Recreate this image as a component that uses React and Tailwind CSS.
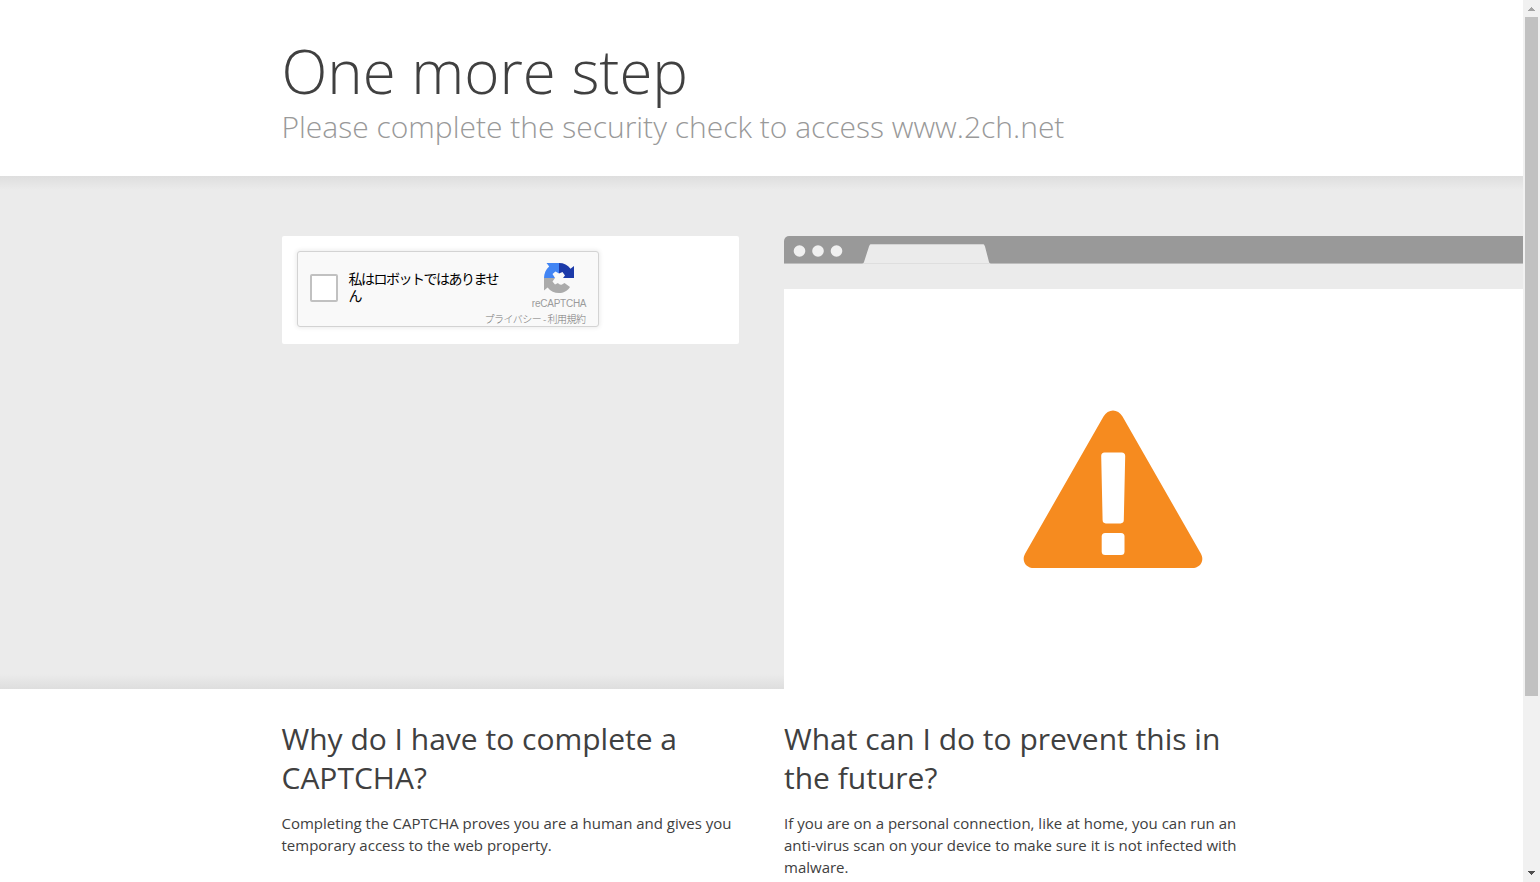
import React from "react";

const RecaptchaLogo = () => (
  <svg className="w-[30px] h-[30px]" viewBox="0 0 30 30">
    <path fill="#1c3aa9" d="M30 3V15H19l2-2.500-2.500-3.500L15 10.500V0c4.800 0 8.800 2 11.500 5.800z" />
    <path fill="#4285f4" d="M15 0v10.500l-3.500-2L8.500 11l2.500 4H0C0 10.500 2 6.500 5.200 3.600L2.500 0z" />
    <path fill="#ababab" d="M0 15h11l-2.500 3.500 2.500 3 3-1.500c1 1.500 2.500 2 4 1.500l2.500-1.500 5.500 4C23.300 28.200 19.500 30 15 30c-4.500 0-8.500-2-11.400-5.600L0 27.500z" />
  </svg>
);

const Captcha = () => {
  return (
    <div className="flex w-[302px] h-[76px] bg-[#f9f9f9] border border-[#d3d3d3] rounded-[3px] shadow-[0_0_4px_1px_rgba(0,0,0,0.08)]">
      <div className="mt-[22px] ml-3 w-7 h-7 shrink-0 bg-white border-2 border-[#c1c1c1] rounded-[2px]" />
      <div className="mt-[18px] ml-[11px] w-[136px] text-[14px] leading-[17px] tracking-[-1.5px] font-normal text-black whitespace-nowrap font-['Noto_Sans_CJK_JP',sans-serif]">
        私はロボットではありませ
        <br />
        ん
      </div>
      <div className="flex flex-col items-end flex-1 pr-3 pt-[11px]">
        <div className="flex flex-col items-center w-[55px]">
          <RecaptchaLogo />
          <span className="mt-[5px] text-[10px] leading-[12px] tracking-[-0.25px] text-[#9b9b9b] font-['Liberation_Sans',sans-serif]">
            reCAPTCHA
          </span>
        </div>
        <div className="mt-[2px] mr-px text-[10px] leading-[14px] tracking-[-0.5px] font-light text-[#777] whitespace-nowrap font-['Noto_Sans_CJK_JP',sans-serif]">
          プライバシー - 利用規約
        </div>
      </div>
    </div>
  );
};

const BrowserWindow = () => {
  return (
    <div className="flex flex-col flex-1 h-[453px] bg-white rounded-tl-[5px] overflow-hidden">
      {/* Title bar with the window dots and an empty tab */}
      <div className="flex h-7 shrink-0 bg-[#999] border-b border-[#bdbdbd]">
        <svg className="w-[210px] h-7 shrink-0" viewBox="0 0 210 28">
          <circle cx="15.500" cy="15" r="5.800" fill="#f0f0f0" />
          <circle cx="34" cy="15" r="5.800" fill="#f0f0f0" />
          <circle cx="52.500" cy="15" r="5.800" fill="#f0f0f0" />
          <path d="M78 28c1 0 1.500-1 2-2l5-15.500c.6-1.700 1.200-2.500 3-2.500h110c1.800 0 2.400.8 3 2.500L205 26c.4 1 1 2 2 2z" fill="#ebebeb" />
          <path d="M87 8.500h112" stroke="#d4d4d4" />
          <path d="M79 27.500h127" stroke="#dedede" />
        </svg>
      </div>
      <div className="h-[25px] shrink-0 bg-[#ebebeb]" />
      <div className="pt-[121px] pl-[239px]">
        <svg className="w-[180px] h-[160px]" viewBox="0 0 180 160">
          <path
            fill="#f68b1f"
            d="M80.500 6.500C85-1.500 95-1.500 99.500 6.500L177.800 143.500C182 151 177 158 169 158H11C3 158-2 151 2.200 143.500z"
          />
          <path
            fill="#fff"
            d="M81.500 42.500h17.200c2.200 0 3.500 1.300 3.500 3.400l-1.400 64.200c0 2.100-1.200 3.300-3.200 3.300H82.800c-2 0-3.200-1.200-3.200-3.300L78.200 45.900c0-2.100 1.200-3.400 3.300-3.400z"
          />
          <rect x="78.700" y="123" width="22.800" height="22" rx="3.500" fill="#fff" />
        </svg>
      </div>
    </div>
  );
};

const ScrollBar = () => {
  return (
    <div className="flex flex-col items-center w-[17px] h-full shrink-0 bg-[#f1f1f1]">
      <svg className="w-[17px] h-[17px] shrink-0" viewBox="0 0 17 17" shapeRendering="crispEdges">
        <path d="M8 7h1v1h1v1h1v1h1v1H5v-1h1V9h1V8h1z" fill="#a3a3a3" />
      </svg>
      <div className="w-[13px] h-[679px] bg-[#c1c1c1]" />
      <svg className="mt-auto w-[17px] h-[17px] shrink-0" viewBox="0 0 17 17" shapeRendering="crispEdges">
        <path d="M5 6h7v1h-1v1h-1v1H9v1H8v-1H7V8H6V7H5z" fill="#505050" />
      </svg>
    </div>
  );
};

const App = () => {
  return (
    <div className="flex w-[1540px] h-[882px] overflow-hidden bg-white text-[#404040] font-['Open_Sans',sans-serif]">
      <div className="flex flex-col w-[1523px] shrink-0">
        <header className="h-[176px] shrink-0 pt-[35px] pl-[281.5px]">
          <h1 className="text-[60px] leading-[72px] font-light">One more step</h1>
          <h2 className="text-[30px] leading-[39px] font-light text-[#999]">
            Please complete the security check to access www.2ch.net
          </h2>
        </header>

        <section className="flex gap-[45px] h-[513px] shrink-0 pt-[60px] pl-[281.5px] bg-[#ebebeb] bg-[linear-gradient(to_bottom,#dedede,#ebebeb_14px,#ebebeb_498px,#dedede)]">
          <div className="w-[457.5px] h-[108px] shrink-0 p-[15px] bg-white rounded-[2px]">
            <Captcha />
          </div>
          <BrowserWindow />
        </section>

        <section className="flex gap-[45px] pt-[30px] pl-[281.5px]">
          <div className="w-[457.5px] shrink-0">
            <h2 className="text-[30px] leading-[39px]">Why do I have to complete a CAPTCHA?</h2>
            <p className="mt-[15px] text-[15px] leading-[22px]">
              Completing the CAPTCHA proves you are a human and gives you temporary access to the web property.
            </p>
          </div>
          <div className="w-[457.5px] shrink-0">
            <h2 className="text-[30px] leading-[39px]">What can I do to prevent this in the future?</h2>
            <p className="mt-[15px] text-[15px] leading-[22px]">
              If you are on a personal connection, like at home, you can run an anti-virus scan on your device to make
              sure it is not infected with malware.
            </p>
          </div>
        </section>
      </div>
      <ScrollBar />
    </div>
  );
};

export default App;
